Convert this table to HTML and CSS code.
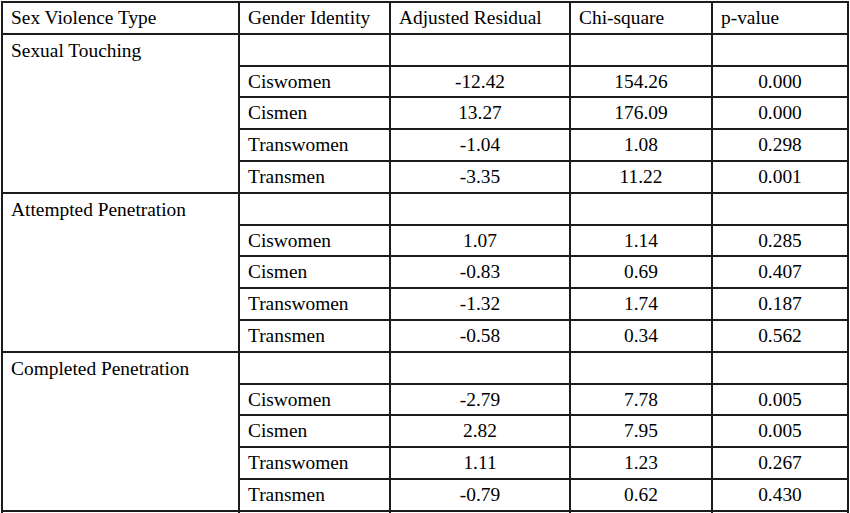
FILE: index.html
```html
<!DOCTYPE html>
<html>
<head>
<meta charset="utf-8">
<link rel="stylesheet" href="styles.css">
</head>
<body>
<table class="stats">
  <colgroup>
    <col class="c1"><col class="c2"><col class="c3"><col class="c4"><col class="c5">
  </colgroup>
  <tr>
    <td>Sex Violence Type</td><td>Gender Identity</td><td>Adjusted Residual</td><td>Chi-square</td><td>p-value</td>
  </tr>
  <tr>
    <td class="group" rowspan="5">Sexual Touching</td><td></td><td></td><td></td><td></td>
  </tr>
  <tr><td>Ciswomen</td><td class="num">-12.42</td><td class="num">154.26</td><td class="num">0.000</td></tr>
  <tr><td>Cismen</td><td class="num">13.27</td><td class="num">176.09</td><td class="num">0.000</td></tr>
  <tr><td>Transwomen</td><td class="num">-1.04</td><td class="num">1.08</td><td class="num">0.298</td></tr>
  <tr><td>Transmen</td><td class="num">-3.35</td><td class="num">11.22</td><td class="num">0.001</td></tr>
  <tr>
    <td class="group" rowspan="5">Attempted Penetration</td><td></td><td></td><td></td><td></td>
  </tr>
  <tr><td>Ciswomen</td><td class="num">1.07</td><td class="num">1.14</td><td class="num">0.285</td></tr>
  <tr><td>Cismen</td><td class="num">-0.83</td><td class="num">0.69</td><td class="num">0.407</td></tr>
  <tr><td>Transwomen</td><td class="num">-1.32</td><td class="num">1.74</td><td class="num">0.187</td></tr>
  <tr><td>Transmen</td><td class="num">-0.58</td><td class="num">0.34</td><td class="num">0.562</td></tr>
  <tr>
    <td class="group" rowspan="5">Completed Penetration</td><td></td><td></td><td></td><td></td>
  </tr>
  <tr><td>Ciswomen</td><td class="num">-2.79</td><td class="num">7.78</td><td class="num">0.005</td></tr>
  <tr><td>Cismen</td><td class="num">2.82</td><td class="num">7.95</td><td class="num">0.005</td></tr>
  <tr><td>Transwomen</td><td class="num">1.11</td><td class="num">1.23</td><td class="num">0.267</td></tr>
  <tr><td>Transmen</td><td class="num">-0.79</td><td class="num">0.62</td><td class="num">0.430</td></tr>
  <tr><td></td><td></td><td></td><td></td><td></td></tr>
</table>
</body>
</html>
```
FILE: styles.css
```css
html, body {
  margin: 0;
  padding: 0;
  background: #fff;
  overflow: hidden;
}
body {
  padding: 1px 0 0 1px;
  font-family: "Liberation Serif", Tinos, "DejaVu Serif", serif;
  font-size: 19.4px;
  color: #000;
}
.stats {
  border-collapse: collapse;
  table-layout: fixed;
  width: 846px;
}
.c1 { width: 237px; }
.c2 { width: 151px; }
.c3 { width: 180px; }
.c4 { width: 142px; }
.c5 { width: 136px; }
.stats td {
  border: 2px solid #1c1c1c;
  height: 29.8px;
  padding: 0 0 0 8px;
  vertical-align: middle;
  line-height: 29.8px;
  white-space: nowrap;
}
.stats td.group {
  vertical-align: top;
  line-height: 31px;
}
.stats td.num {
  text-align: center;
  padding: 0;
}
```
